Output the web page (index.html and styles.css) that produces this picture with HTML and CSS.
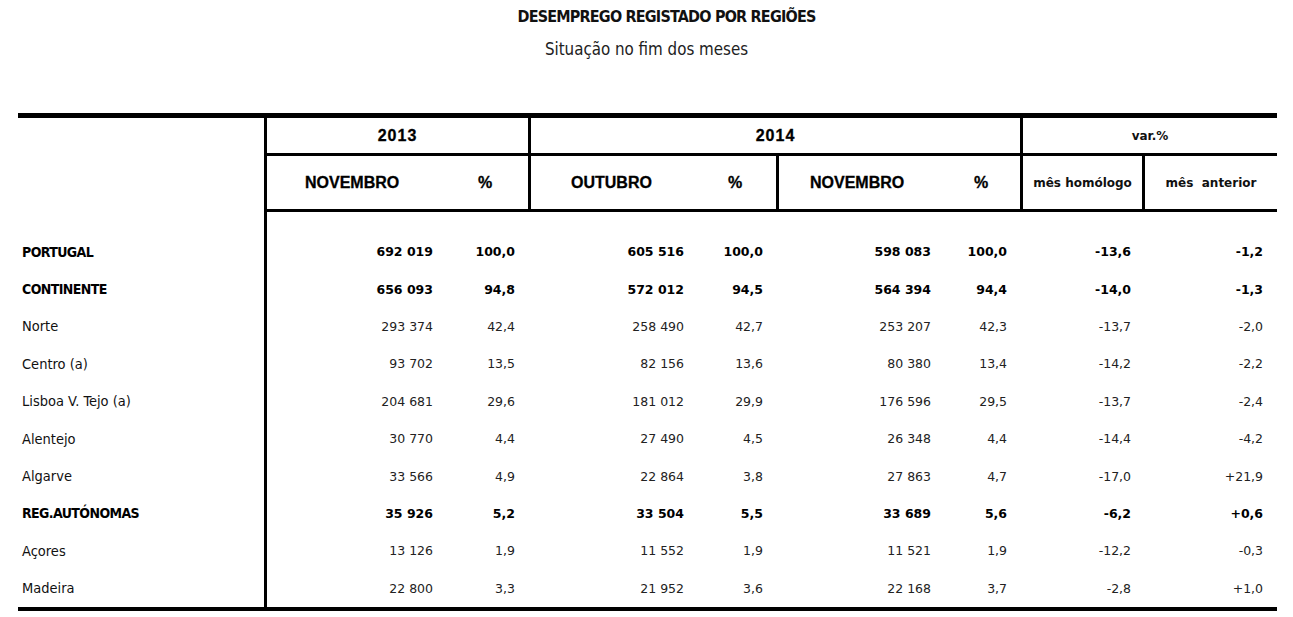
FILE: index.html
```html
<!DOCTYPE html>
<html lang="pt">
<head>
<meta charset="utf-8">
<title>Desemprego registado por regiões</title>
<link rel="stylesheet" href="styles.css">
</head>
<body>
<header class="heading">
  <h1 class="title">DESEMPREGO REGISTADO POR REGIÕES</h1>
  <p class="subtitle">Situação no fim dos meses</p>
</header>
<table class="data">
  <colgroup>
    <col class="w-label"><col class="w-n13"><col class="w-p13"><col class="w-nout"><col class="w-pout"><col class="w-nnov"><col class="w-pnov"><col class="w-hom"><col class="w-ant">
  </colgroup>
  <thead>
    <tr class="hrow1">
      <th class="blank" rowspan="2"></th>
      <th class="yr sep" colspan="2">2013</th>
      <th class="yr sep" colspan="4">2014</th>
      <th class="var sep" colspan="2">var.%</th>
    </tr>
    <tr class="hrow2">
      <th class="mon sep m13">NOVEMBRO</th>
      <th class="pct p13">%</th>
      <th class="mon sep mout">OUTUBRO</th>
      <th class="pct pout">%</th>
      <th class="mon sep mnov">NOVEMBRO</th>
      <th class="pct pnov">%</th>
      <th class="sub sep">mês homólogo</th>
      <th class="sub sep">mês&nbsp; anterior</th>
    </tr>
  </thead>
  <tbody>
    <tr class="gap"><td></td><td class="sep" colspan="8"></td></tr>
    <tr class="row bold"><td class="lbl">PORTUGAL</td><td class="n sep c1">692 019</td><td class="n c2">100,0</td><td class="n c3">605 516</td><td class="n c4">100,0</td><td class="n c5">598 083</td><td class="n c6">100,0</td><td class="n c7">-13,6</td><td class="n c8">-1,2</td></tr>
    <tr class="row bold"><td class="lbl">CONTINENTE</td><td class="n sep c1">656 093</td><td class="n c2">94,8</td><td class="n c3">572 012</td><td class="n c4">94,5</td><td class="n c5">564 394</td><td class="n c6">94,4</td><td class="n c7">-14,0</td><td class="n c8">-1,3</td></tr>
    <tr class="row"><td class="lbl">Norte</td><td class="n sep c1">293 374</td><td class="n c2">42,4</td><td class="n c3">258 490</td><td class="n c4">42,7</td><td class="n c5">253 207</td><td class="n c6">42,3</td><td class="n c7">-13,7</td><td class="n c8">-2,0</td></tr>
    <tr class="row"><td class="lbl">Centro (a)</td><td class="n sep c1">93 702</td><td class="n c2">13,5</td><td class="n c3">82 156</td><td class="n c4">13,6</td><td class="n c5">80 380</td><td class="n c6">13,4</td><td class="n c7">-14,2</td><td class="n c8">-2,2</td></tr>
    <tr class="row"><td class="lbl">Lisboa V. Tejo (a)</td><td class="n sep c1">204 681</td><td class="n c2">29,6</td><td class="n c3">181 012</td><td class="n c4">29,9</td><td class="n c5">176 596</td><td class="n c6">29,5</td><td class="n c7">-13,7</td><td class="n c8">-2,4</td></tr>
    <tr class="row"><td class="lbl">Alentejo</td><td class="n sep c1">30 770</td><td class="n c2">4,4</td><td class="n c3">27 490</td><td class="n c4">4,5</td><td class="n c5">26 348</td><td class="n c6">4,4</td><td class="n c7">-14,4</td><td class="n c8">-4,2</td></tr>
    <tr class="row"><td class="lbl">Algarve</td><td class="n sep c1">33 566</td><td class="n c2">4,9</td><td class="n c3">22 864</td><td class="n c4">3,8</td><td class="n c5">27 863</td><td class="n c6">4,7</td><td class="n c7">-17,0</td><td class="n c8">+21,9</td></tr>
    <tr class="row bold"><td class="lbl">REG.AUTÓNOMAS</td><td class="n sep c1">35 926</td><td class="n c2">5,2</td><td class="n c3">33 504</td><td class="n c4">5,5</td><td class="n c5">33 689</td><td class="n c6">5,6</td><td class="n c7">-6,2</td><td class="n c8">+0,6</td></tr>
    <tr class="row"><td class="lbl">Açores</td><td class="n sep c1">13 126</td><td class="n c2">1,9</td><td class="n c3">11 552</td><td class="n c4">1,9</td><td class="n c5">11 521</td><td class="n c6">1,9</td><td class="n c7">-12,2</td><td class="n c8">-0,3</td></tr>
    <tr class="row"><td class="lbl">Madeira</td><td class="n sep c1">22 800</td><td class="n c2">3,3</td><td class="n c3">21 952</td><td class="n c4">3,6</td><td class="n c5">22 168</td><td class="n c6">3,7</td><td class="n c7">-2,8</td><td class="n c8">+1,0</td></tr>
  </tbody>
</table>
</body>
</html>
```
FILE: styles.css
```css
html, body {
  margin: 0;
  padding: 0;
  background: #ffffff;
  color: #111111;
}

th, td {
  box-sizing: border-box;
  padding: 0;
  vertical-align: middle;
}

.heading {
  padding-top: 8px;
}

.title {
  margin: 0;
  padding-left: 40px;
  text-align: center;
  font-family: "DejaVu Sans Condensed", "DejaVu Sans", sans-serif;
  font-stretch: condensed;
  font-weight: bold;
  font-size: 16px;
  letter-spacing: -0.8px;
  line-height: 18px;
  color: #111111;
}

.subtitle {
  margin: 13px 0 0 0;
  text-align: center;
  font-family: "DejaVu Sans Condensed", "DejaVu Sans", sans-serif;
  font-stretch: condensed;
  font-weight: normal;
  font-size: 16.8px;
  line-height: 20px;
  color: #222222;
}

.data {
  margin: 54px 0 0 18px;
  width: 1259px;
  table-layout: fixed;
  border-collapse: separate;
  border-spacing: 0;
  border-top: 5px solid #000;
  border-bottom: 4px solid #000;
}

.w-label { width: 246px; }
.w-n13 { width: 191px; }
.w-p13 { width: 73px; }
.w-nout { width: 172px; }
.w-pout { width: 76px; }
.w-nnov { width: 174px; }
.w-pnov { width: 70px; }
.w-hom { width: 122px; }
.w-ant { width: 135px; }

.sep {
  border-left: 3px solid #000;
}

.hrow1 { height: 38px; }
.hrow2 { height: 56px; }

.hrow1 th:not(.blank),
.hrow2 th {
  border-bottom: 3px solid #000;
}

.yr {
  text-align: center;
  font-family: "Liberation Sans", Arial, sans-serif;
  font-weight: bold;
  font-size: 16px;
  letter-spacing: 1px;
  color: #000;
  -webkit-text-stroke: 0.3px #000;
}

.var {
  text-align: center;
  font-family: "DejaVu Sans", Verdana, sans-serif;
  font-weight: bold;
  font-size: 12px;
  color: #111;
}

.mon, .pct {
  text-align: left;
  font-family: "Liberation Sans", Arial, sans-serif;
  font-weight: bold;
  font-size: 16px;
  color: #000;
  -webkit-text-stroke: 0.3px #000;
}

.m13 { padding-left: 38px; }
.p13 { padding-left: 23px; }
.mout { padding-left: 40px; }
.pout { padding-left: 28px; }
.mnov { padding-left: 31px; }
.pnov { padding-left: 24px; }

.sub {
  text-align: center;
  font-family: "DejaVu Sans", Verdana, sans-serif;
  font-weight: bold;
  font-size: 12px;
  color: #111;
  white-space: nowrap;
}

.gap { height: 21px; }

.row { height: 37.4px; }

.lbl {
  padding-left: 4px;
  text-align: left;
  font-family: "DejaVu Sans Condensed", "DejaVu Sans", sans-serif;
  font-stretch: condensed;
  font-size: 14.5px;
  color: #111;
}

.n {
  text-align: right;
  font-family: "DejaVu Sans", Verdana, sans-serif;
  font-size: 12.5px;
  color: #222;
  white-space: nowrap;
}

.bold .lbl, .bold .n {
  font-weight: bold;
  color: #000;
}

.bold .lbl {
  font-size: 14px;
  letter-spacing: -0.6px;
}

.c1 { padding-right: 22px; }
.c2 { padding-right: 13px; }
.c3 { padding-right: 16px; }
.c4 { padding-right: 13px; }
.c5 { padding-right: 19px; }
.c6 { padding-right: 13px; }
.c7 { padding-right: 11px; }
.c8 { padding-right: 14px; }
```
